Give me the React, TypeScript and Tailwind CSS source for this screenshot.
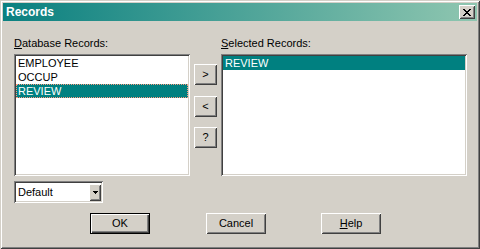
import React from 'react';

const FONT = 'font-["Liberation_Sans",Arial,sans-serif]';

const SUNKEN =
  'shadow-[inset_1px_1px_0_#808080,inset_-1px_-1px_0_#ffffff,inset_2px_2px_0_#404040,inset_-2px_-2px_0_#d4d0c8]';
const RAISED =
  'shadow-[inset_1px_1px_0_#ffffff,inset_-1px_-1px_0_#404040,inset_2px_2px_0_#d4d0c8,inset_-2px_-2px_0_#808080]';
const DEFAULT_BTN =
  'shadow-[inset_1px_1px_0_#000000,inset_-1px_-1px_0_#000000,inset_2px_2px_0_#ffffff,inset_-2px_-2px_0_#404040,inset_-3px_-3px_0_#808080]';

const DATABASE = ['EMPLOYEE', 'OCCUP', 'REVIEW'];

const CloseGlyph = () => (
  <svg width="8" height="7" viewBox="0 0 8 7" shapeRendering="crispEdges">
    <path
      d="M0 0h2v1H0zM6 0h2v1H6zM1 1h2v1H1zM5 1h2v1H5zM2 2h4v1H2zM3 3h2v1H3zM2 4h4v1H2zM1 5h2v1H1zM5 5h2v1H5zM0 6h2v1H0zM6 6h2v1H6z"
      fill="#000"
    />
  </svg>
);

const DownArrow = () => (
  <svg width="5" height="3" viewBox="0 0 5 3" shapeRendering="crispEdges">
    <path d="M0 0h5v1H0zM1 1h3v1H1zM2 2h1v1H2z" fill="#000" />
  </svg>
);

const SmallButton: React.FC<{ label: string; className?: string }> = ({ label, className }) => (
  <div
    className={`w-[23px] h-[21px] flex items-center justify-center text-[11px] leading-none text-black ${RAISED} ${className ?? ''}`}
  >
    {label}
  </div>
);

const DialogButton: React.FC<{ children: React.ReactNode; isDefault?: boolean; className?: string }> = ({
  children,
  isDefault,
  className,
}) => (
  <div
    className={`w-[60px] h-[21px] flex items-center justify-center text-[11px] text-black ${isDefault ? DEFAULT_BTN : RAISED} ${className ?? ''}`}
  >
    {children}
  </div>
);

export default function App() {
  return (
    <div className={`w-[480px] h-[249px] bg-[#d4d0c8] p-[3px] flex flex-col ${FONT} shadow-[inset_1px_1px_0_#d4d0c8,inset_-1px_-1px_0_#404040,inset_2px_2px_0_#ffffff,inset_-2px_-2px_0_#808080]`}>
      {/* title bar */}
      <div className="h-[18px] flex items-center justify-between pl-[3px] pr-[2px] bg-[linear-gradient(to_right,#0a8080,#8fc6b0)]">
        <span className="text-white font-bold text-[12px] leading-none">Records</span>
        <div className={`w-[16px] h-[14px] bg-[#d4d0c8] flex items-center justify-center ${RAISED}`}>
          <CloseGlyph />
        </div>
      </div>

      <div className="pl-[11px] pt-[16px] flex flex-col">
        <div className="flex">
          {/* left column */}
          <div className="w-[176px] flex flex-col">
            <div className="text-[11px] leading-[13px] h-[13px] text-black">
              <span className="underline">D</span>atabase Records:
            </div>
            <div className={`mt-[4px] h-[122px] bg-white p-[2px] ${SUNKEN}`}>
              {DATABASE.map(rec => (
                <div
                  key={rec}
                  className={`h-[14px] leading-[14px] text-[11px] pl-[2px] ${
                    rec === 'REVIEW'
                      ? 'bg-[#008080] text-white outline-1 outline-dotted outline-[#ff9a80] -outline-offset-1'
                      : 'text-black'
                  }`}
                >
                  {rec}
                </div>
              ))}
            </div>
            <div className={`mt-[5px] w-[89px] h-[22px] bg-white p-[2px] flex items-center ${SUNKEN}`}>
              <span className="flex-1 text-[11px] pl-[2px] text-black">Default</span>
              <div className={`w-[12px] h-[17px] bg-[#d4d0c8] flex items-center justify-center ${RAISED}`}>
                <DownArrow />
              </div>
            </div>
          </div>

          {/* move buttons */}
          <div className="ml-[4px] pt-[27px] flex flex-col">
            <SmallButton label=">" />
            <SmallButton label="<" className="mt-[11px]" />
            <SmallButton label="?" className="mt-[10px]" />
          </div>

          {/* right column */}
          <div className="ml-[4px] w-[246px] flex flex-col">
            <div className="text-[11px] leading-[13px] h-[13px] text-black">
              <span className="underline">S</span>elected Records:
            </div>
            <div className={`mt-[4px] h-[122px] bg-white p-[2px] ${SUNKEN}`}>
              <div className="h-[14px] leading-[14px] text-[11px] pl-[2px] bg-[#008080] text-white">REVIEW</div>
            </div>
          </div>
        </div>

        <div className="mt-[10px] flex">
          <DialogButton isDefault className="ml-[76px]">
            OK
          </DialogButton>
          <DialogButton className="ml-[56px]">Cancel</DialogButton>
          <DialogButton className="ml-[55px]">
            <span className="underline">H</span>elp
          </DialogButton>
        </div>
      </div>
    </div>
  );
}
